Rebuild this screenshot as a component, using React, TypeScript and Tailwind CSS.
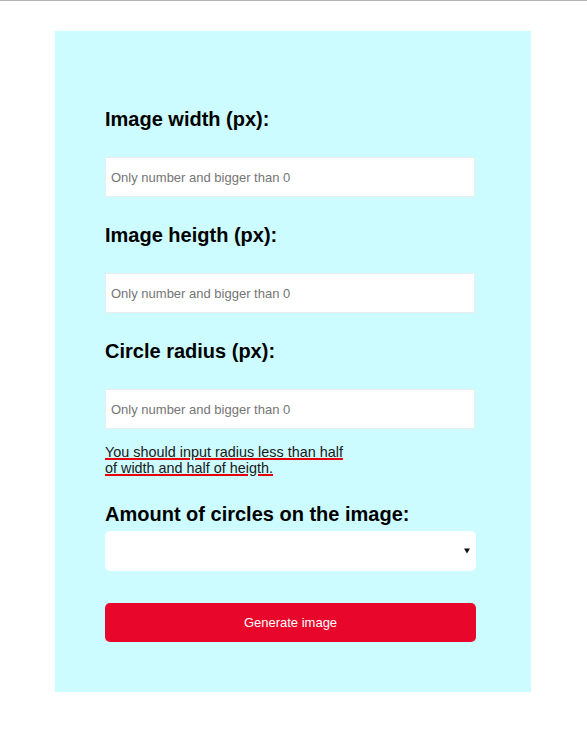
import { useState } from 'react';

const fields = [
  { id: 'width', label: 'Image width (px):' },
  { id: 'height', label: 'Image heigth (px):' },
  { id: 'radius', label: 'Circle radius (px):' },
];

export default function App() {
  const [values, setValues] = useState<Record<string, string>>({});

  return (
    <div className="min-h-[749px] bg-white font-['Liberation_Sans',Arial,sans-serif] text-black">
      <div className="h-px bg-[#b3b3b3]" />
      <div className="ml-[55px] mt-[30px] w-[476px] bg-[#ccfcff] pl-[50px] pt-[75px] pb-[50px]">
        {fields.map((field, i) => (
          <div key={field.id} className={i === 0 ? '' : 'mt-[25px]'}>
            <label htmlFor={field.id} className="block text-[20px] font-bold leading-[27px]">
              {field.label}
            </label>
            <input
              id={field.id}
              type="text"
              value={values[field.id] ?? ''}
              onChange={(e) => setValues({ ...values, [field.id]: e.target.value })}
              placeholder="Only number and bigger than 0"
              className="mt-[24px] block h-[40px] w-[370px] border border-[#ececec] bg-white px-[5px] text-[13px] outline-none placeholder:text-[#757575]"
            />
          </div>
        ))}

        {/* Error message, red underline */}
        <p className="mt-[15px] w-[245px] text-[14.4px] leading-[16px] text-[#1a1a1a] underline decoration-red-600 decoration-2 underline-offset-[1px]">
          You should input radius less than half of width and half of heigth.
        </p>

        <label htmlFor="amount" className="mt-[27px] block text-[20px] font-bold leading-[23px]">
          Amount of circles on the image:
        </label>
        <div className="relative mt-[5px] w-[371px]">
          <select
            id="amount"
            className="block h-[40px] w-full appearance-none rounded-[5px] border-0 bg-white px-[8px] text-[13px] outline-none"
          >
            <option value=""></option>
            <option value="1">1</option>
            <option value="2">2</option>
            <option value="3">3</option>
          </select>
          <svg
            className="pointer-events-none absolute right-[6px] top-[17px]"
            width="6"
            height="6"
            viewBox="0 0 6 6"
          >
            <path d="M0 0.5 H6 L3 5.5 Z" fill="#111" />
          </svg>
        </div>

        <button
          type="button"
          className="mt-[32px] block h-[39px] w-[371px] rounded-[5px] bg-[#e8072a] text-[13px] text-white"
        >
          Generate image
        </button>
      </div>
    </div>
  );
}
